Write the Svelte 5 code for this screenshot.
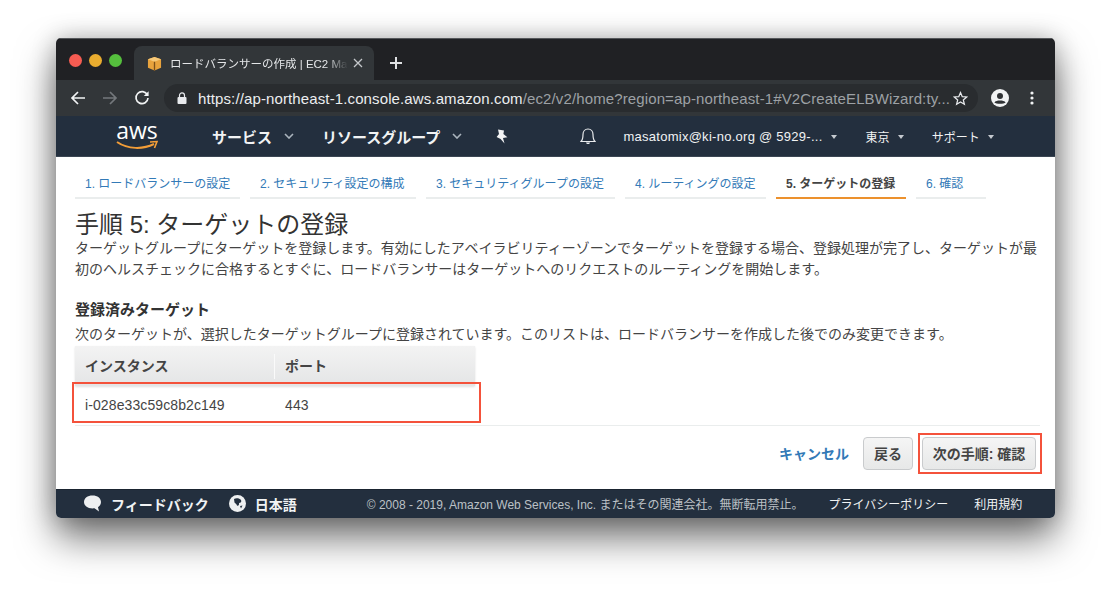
<script>
  const tabs = [
    { label: "1. ロードバランサーの設定", w: 165 },
    { label: "2. セキュリティ設定の構成", w: 166 },
    { label: "3. セキュリティグループの設定", w: 189 },
    { label: "4. ルーティングの設定", w: 141 },
    { label: "5. ターゲットの登録", w: 130, active: true },
    { label: "6. 確認", w: 70 }
  ];
</script>

<div class="page">
  <div class="window">
    <div class="titlebar">
      <div class="lights">
        <span class="light red"></span>
        <span class="light yellow"></span>
        <span class="light green"></span>
      </div>
      <div class="tab">
        <svg class="favicon" width="15" height="15" viewBox="0 0 16 16">
          <path d="M8 1 L15 3.5 V12.5 L8 15.5 L1 12.5 V3.5 Z" fill="#e8a33d" />
          <path d="M1 3.5 L8 6 L15 3.5 L8 1 Z" fill="#f6c878" />
          <path d="M8 6 V15.5" stroke="#7d5119" stroke-width="1.4" />
        </svg>
        <span class="tab-title">ロードバランサーの作成 | EC2 Ma</span>
        <svg class="tab-close" width="10" height="10" viewBox="0 0 10 10">
          <path d="M1 1 L9 9 M9 1 L1 9" stroke="#c4c7ca" stroke-width="1.3" />
        </svg>
      </div>
      <svg class="newtab" width="14" height="14" viewBox="0 0 14 14">
        <path d="M7 1 V13 M1 7 H13" stroke="#dfe1e3" stroke-width="2" />
      </svg>
    </div>

    <div class="toolbar">
      <svg class="nav" width="16" height="16" viewBox="0 0 16 16" fill="none">
        <path d="M15 8 H2 M8 2 L2 8 L8 14" stroke="#f1f3f4" stroke-width="1.7" />
      </svg>
      <svg class="nav" width="16" height="16" viewBox="0 0 16 16" fill="none">
        <path d="M1 8 H14 M8 2 L14 8 L8 14" stroke="#74787c" stroke-width="1.7" />
      </svg>
      <svg class="nav" width="16" height="16" viewBox="0 0 16 16" fill="none">
        <path d="M13.4 5 A6 6 0 1 0 14 8" stroke="#f1f3f4" stroke-width="1.7" />
        <path d="M14.6 1.2 V6 H9.8 Z" fill="#f1f3f4" />
      </svg>
      <div class="omnibox">
        <svg class="lock" width="10" height="12" viewBox="0 0 10 12" fill="none">
          <rect x="0.5" y="5" width="9" height="7" rx="1" fill="#e8eaed" />
          <path d="M2.5 5 V3.4 A2.5 2.5 0 0 1 7.5 3.4 V5" stroke="#e8eaed" stroke-width="1.2" />
        </svg>
        <span class="url"><span class="url-strong">https://ap-northeast-1.console.aws.amazon.com</span>/ec2/v2/home?region=ap-northeast-1#V2CreateELBWizard:ty...</span>
        <svg class="star" width="15" height="15" viewBox="0 0 24 24" fill="none">
          <path d="M12 2.5 L14.8 9 L22 9.6 L16.5 14.3 L18.2 21.3 L12 17.6 L5.8 21.3 L7.5 14.3 L2 9.6 L9.2 9 Z" stroke="#e8eaed" stroke-width="2" />
        </svg>
      </div>
      <svg class="avatar" width="18" height="18" viewBox="0 0 18 18">
        <circle cx="9" cy="9" r="9" fill="#f1f3f4" />
        <circle cx="9" cy="7" r="3" fill="#2f3235" />
        <path d="M3.4 13.4 C5 10.8 13 10.8 14.6 13.4 C13 15.2 5 15.2 3.4 13.4 Z" fill="#2f3235" />
      </svg>
      <svg class="more" width="4" height="14" viewBox="0 0 4 14">
        <circle cx="2" cy="2" r="1.6" fill="#f1f3f4" />
        <circle cx="2" cy="7" r="1.6" fill="#f1f3f4" />
        <circle cx="2" cy="12" r="1.6" fill="#f1f3f4" />
      </svg>
    </div>

    <div class="awsbar">
      <div class="logo">
        <span class="logo-text">aws</span>
        <svg width="42" height="11" viewBox="0 0 42 11" fill="none">
          <path d="M1 2 C12 9.5 27 9.5 38 4" stroke="#f29d38" stroke-width="2" />
          <path d="M34 2 L41 1.5 L38.5 8" stroke="#f29d38" stroke-width="1.6" />
        </svg>
      </div>
      <span class="menu big services">サービス</span>
      <svg class="caret big-caret" width="10" height="6" viewBox="0 0 10 6" fill="none"><path d="M1 1 L5 5 L9 1" stroke="#aab4bd" stroke-width="1.6" /></svg>
      <span class="menu big groups">リソースグループ</span>
      <svg class="caret big-caret" width="10" height="6" viewBox="0 0 10 6" fill="none"><path d="M1 1 L5 5 L9 1" stroke="#aab4bd" stroke-width="1.6" /></svg>
      <svg class="pin" width="13" height="15" viewBox="0 0 13 15">
        <path d="M3 0.5 L9 1.5 L8.4 5 L12.4 8.2 L8 9 L9.5 14.5 L5.6 10 L1.6 8 L4 5 Z" fill="#f2f3f4" />
      </svg>
      <svg class="bell" width="16" height="18" viewBox="0 0 16 18" fill="none">
        <path d="M1 14.5 H15 C13 12.5 13 10.5 13 7.5 C13 4.5 11 2 8 2 C5 2 3 4.5 3 7.5 C3 10.5 3 12.5 1 14.5 Z" stroke="#e9ebed" stroke-width="1.2" />
        <path d="M6 15.5 C6.4 17.5 9.6 17.5 10 15.5 Z" fill="#e9ebed" />
      </svg>
      <span class="menu account">masatomix@ki-no.org @ 5929-...</span>
      <span class="tri"></span>
      <span class="menu small region">東京</span>
      <span class="tri"></span>
      <span class="menu small support">サポート</span>
      <span class="tri"></span>
    </div>

    <div class="content">
      <div class="steps">
        {#each tabs as t}
          <div class="step" class:active={t.active} style="width: {t.w}px">{t.label}</div>
        {/each}
      </div>
      <h1>手順 5: ターゲットの登録</h1>
      <p class="lead">ターゲットグループにターゲットを登録します。有効にしたアベイラビリティーゾーンでターゲットを登録する場合、登録処理が完了し、ターゲットが最初のヘルスチェックに合格するとすぐに、ロードバランサーはターゲットへのリクエストのルーティングを開始します。</p>
      <h2>登録済みターゲット</h2>
      <p class="sub">次のターゲットが、選択したターゲットグループに登録されています。このリストは、ロードバランサーを作成した後でのみ変更できます。</p>
      <div class="table">
        <div class="thead">
          <div class="th first">インスタンス</div>
          <div class="th">ポート</div>
        </div>
        <div class="trow">
          <div class="td first">i-028e33c59c8b2c149</div>
          <div class="td">443</div>
        </div>
        <div class="mark mark-row"></div>
      </div>
      <div class="actions">
        <span class="cancel">キャンセル</span>
        <button class="btn back">戻る</button>
        <div class="next-wrap">
          <button class="btn next">次の手順: 確認</button>
          <div class="mark mark-next"></div>
        </div>
      </div>
    </div>

    <div class="footer">
      <svg class="bubble" width="19" height="17" viewBox="0 0 19 17">
        <path d="M9.5 0.5 C14.5 0.5 18 3.2 18 7 C18 9.5 16.5 11.3 15 12.2 L16 16.5 L11.5 13.3 C5 14 1 11 1 7 C1 3.2 4.5 0.5 9.5 0.5 Z" fill="#eef0f1" />
      </svg>
      <span class="foot-strong feedback">フィードバック</span>
      <svg class="globe" width="17" height="17" viewBox="0 0 17 17">
        <circle cx="8.5" cy="8.5" r="8.5" fill="#eef0f1" />
        <path d="M5 4 C7 2.5 10.5 3 12 5 C13 7 11.5 8 10 8 C10.5 10 9 11.5 8 10.5 C7.5 9 6.5 8.5 5.5 7.5 Z M11 11 L13.5 10.5 L12 13.5 Z" fill="#232f3e" />
      </svg>
      <span class="foot-strong">日本語</span>
      <span class="copyright">© 2008 - 2019, Amazon Web Services, Inc. またはその関連会社。無断転用禁止。</span>
      <span class="foot-link privacy">プライバシーポリシー</span>
      <span class="foot-link terms">利用規約</span>
    </div>
  </div>
</div>

<style>
  :global(body) {
    margin: 0;
    background: #fff;
  }

  .page {
    width: 1111px;
    height: 593px;
    padding: 38px 0 0 56px;
    box-sizing: border-box;
    overflow: hidden;
    font-family: "Liberation Sans", "Noto Sans CJK JP", sans-serif;
  }

  .window {
    width: 999px;
    height: 480px;
    display: flex;
    flex-direction: column;
    border-radius: 5px;
    overflow: hidden;
    box-shadow: 0 20px 38px rgba(0, 0, 0, 0.55), 0 0 24px rgba(0, 0, 0, 0.24);
    position: relative;
  }

  .titlebar {
    height: 42px;
    background: #202124;
    display: flex;
    align-items: flex-end;
    flex-shrink: 0;
    box-shadow: inset 0 1px 0 #55575a;
  }

  .lights {
    display: flex;
    gap: 7px;
    padding: 0 0 13px 13px;
    width: 78px;
    box-sizing: border-box;
  }

  .light {
    width: 13px;
    height: 13px;
    border-radius: 50%;
  }

  .red { background: #f65c52; }
  .yellow { background: #e9ac2f; }
  .green { background: #55bf3d; }

  .tab {
    width: 240px;
    height: 34px;
    background: #323639;
    border-radius: 8px 8px 0 0;
    display: flex;
    align-items: center;
    padding: 0 10px 0 13px;
    box-sizing: border-box;
  }

  .tab-title {
    margin-left: 8px;
    font-size: 11.5px;
    color: #e4e6e8;
    width: 178px;
    white-space: nowrap;
    overflow: hidden;
    -webkit-mask-image: linear-gradient(90deg, #000 88%, transparent);
    mask-image: linear-gradient(90deg, #000 88%, transparent);
  }

  .tab-close { margin-left: 5px; }

  .newtab {
    margin: 0 0 10px 15px;
  }

  .toolbar {
    height: 36px;
    background: #323639;
    display: flex;
    align-items: center;
    flex-shrink: 0;
    padding-left: 14px;
  }

  .nav { margin-right: 16px; }

  .omnibox {
    width: 814px;
    height: 28px;
    margin-left: -2px;
    border-radius: 14px;
    background: #292c2f;
    display: flex;
    align-items: center;
    padding-left: 13px;
    box-sizing: border-box;
    flex-shrink: 0;
  }

  .url {
    margin-left: 11px;
    font-size: 15px;
    letter-spacing: 0.12px;
    color: #9da1a5;
    width: 755px;
    flex-shrink: 0;
    white-space: nowrap;
  }

  .url-strong { color: #eceef0; }

  .avatar { margin-left: 13px; }

  .more { margin-left: 21px; }

  .awsbar {
    height: 41px;
    background: #232f3e;
    display: flex;
    align-items: center;
    flex-shrink: 0;
    border-bottom: 1px solid #3b4653;
    box-sizing: border-box;
    color: #f1f3f4;
  }

  .logo {
    width: 42px;
    margin-left: 60px;
    display: flex;
    flex-direction: column;
    align-items: center;
    line-height: 1;
  }

  .logo-text {
    font-size: 23px;
    height: 18px;
    line-height: 16px;
    font-family: "Open Sans", sans-serif;
    color: #fff;
  }

  .menu { white-space: nowrap; }

  .big {
    font-size: 15px;
    font-weight: 700;
  }

  .small { font-size: 12px; }

  .services { margin-left: 54px; }

  .caret { margin-left: 12px; }

  .groups { margin-left: 28px; }

  .pin { margin-left: 33px; }

  .bell { margin-left: 72px; }

  .account {
    margin-left: 27px;
    font-size: 13px;
    letter-spacing: 0.27px;
  }

  .region { margin-left: 29px; }

  .support { margin-left: 28px; }

  .tri {
    width: 0;
    height: 0;
    margin: 1px 0 0 8px;
    border-left: 3.5px solid transparent;
    border-right: 3.5px solid transparent;
    border-top: 4px solid #c5cad0;
  }

  .content {
    flex: 1;
    background: #fff;
    padding: 0 15px 0 19px;
    min-height: 0;
    color: #333;
  }

  .steps {
    display: flex;
    gap: 10px;
    height: 42px;
    padding-top: 16px;
    box-sizing: border-box;
  }

  .step {
    flex-shrink: 0;
    box-sizing: border-box;
    height: 26px;
    border-bottom: 2px solid #eaeded;
    font-size: 12px;
    line-height: 22px;
    color: #337ab7;
    padding-left: 10px;
    white-space: nowrap;
  }

  .step.active {
    color: #444;
    font-weight: 700;
    border-bottom-color: #ec912d;
  }

  h1 {
    margin: 12px 0 0;
    font-size: 24px;
    font-weight: 400;
    line-height: 28px;
    color: #333;
  }

  .lead {
    margin: -1px 0 0;
    font-size: 14px;
    line-height: 21px;
    color: #444;
    width: 970px;
  }

  h2 {
    margin: 20px 0 0;
    font-size: 15px;
    font-weight: 700;
    line-height: 20px;
    color: #333;
  }

  .sub {
    margin: 5px 0 0;
    font-size: 14px;
    line-height: 18px;
    color: #444;
  }

  .table {
    position: relative;
    width: 400px;
    margin-top: 3px;
    font-size: 14px;
  }

  .thead {
    display: flex;
    height: 40px;
    align-items: center;
    background: linear-gradient(#f3f3f3, #e4e5e6);
    box-shadow: 0 1px 2px rgba(0, 0, 0, 0.12);
    font-weight: 700;
    color: #444;
  }

  .th {
    padding-left: 10px;
    padding-bottom: 1px;
    line-height: 24px;
  }

  .th.first {
    width: 200px;
    box-sizing: border-box;
    border-right: 1px solid #fafafa;
  }

  .trow {
    display: flex;
    height: 39px;
    padding-bottom: 2px;
    box-sizing: border-box;
    align-items: center;
    color: #444;
    letter-spacing: 0.1px;
  }

  .td { padding-left: 10px; }

  .td.first {
    width: 200px;
    box-sizing: border-box;
  }

  .mark {
    position: absolute;
    border: 2px solid #f4523b;
    box-sizing: border-box;
    pointer-events: none;
  }

  .mark-row {
    left: -3px;
    top: 36px;
    width: 409px;
    height: 41px;
  }

  .actions {
    display: flex;
    justify-content: flex-end;
    align-items: center;
    height: 54px;
    border-top: 1px solid #eaeded;
    padding-right: 4px;
  }

  .cancel {
    font-size: 14px;
    font-weight: 700;
    color: #337ab7;
    margin-right: 14px;
  }

  .btn {
    height: 33px;
    font-family: inherit;
    font-size: 14px;
    font-weight: 700;
    color: #444;
    border: 1px solid #c9cbcd;
    border-radius: 4px;
    background: linear-gradient(#f5f5f5, #e7e8e8);
    padding: 0;
  }

  .back { width: 50px; }

  .next-wrap {
    position: relative;
    margin-left: 9px;
    display: flex;
  }

  .next { width: 114px; }

  .mark-next {
    left: -4px;
    top: -4px;
    width: 124px;
    height: 41px;
  }

  .footer {
    height: 29px;
    background: #232f3e;
    flex-shrink: 0;
    display: flex;
    align-items: center;
    box-sizing: border-box;
    border-top: 1px solid #1a2430;
    padding-bottom: 1px;
    color: #f1f3f4;
    white-space: nowrap;
  }

  .bubble { margin-left: 27px; }

  .foot-strong {
    font-size: 14px;
    font-weight: 700;
    margin-left: 9px;
  }

  .feedback { margin-right: 20px; }

  .copyright {
    font-size: 12px;
    color: #bcc1c6;
    margin-left: 70px;
  }

  .foot-link { font-size: 12px; }

  .privacy { margin-left: 25px; }

  .terms { margin-left: 26px; }
</style>
